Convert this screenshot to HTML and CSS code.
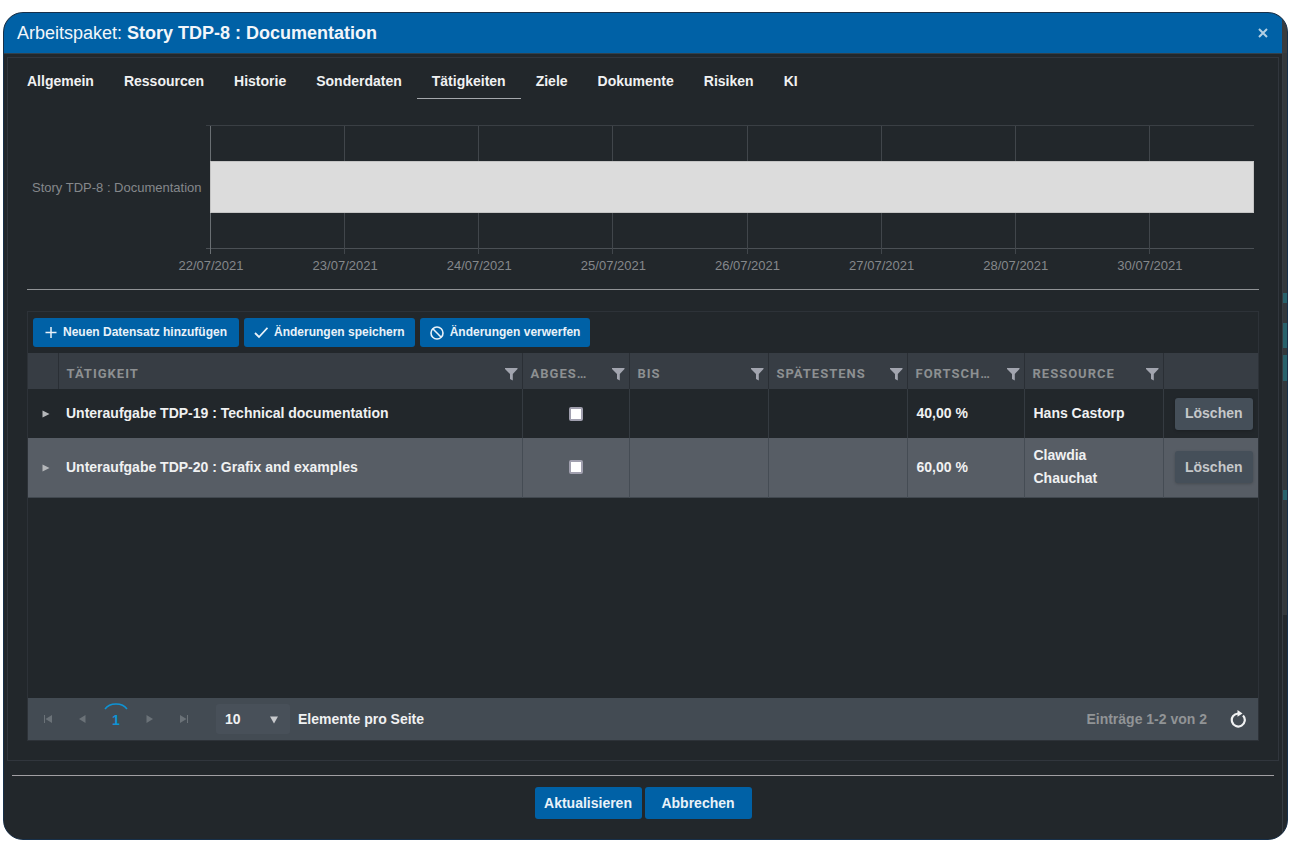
FILE: index.html
```html
<!DOCTYPE html>
<html lang="de">
<head>
<meta charset="utf-8">
<title>Arbeitspaket: Story TDP-8 : Documentation</title>
<link rel="stylesheet" href="styles.css">
</head>
<body>
<svg class="defs" width="0" height="0" aria-hidden="true">
  <symbol id="filter" viewBox="0 0 14 14"><path d="M0 1h12.500v1L7.800 7v6.500L5 12V7L0 2z" fill="currentColor"/></symbol>
</svg>
<div class="frame">
<main class="dialog">
  <header class="titlebar">
    <h1>Arbeitspaket: <strong>Story TDP-8 : Documentation</strong></h1>
    <button class="close" aria-label="Schließen"><svg width="10" height="10" viewBox="0 0 10 10"><path d="M1 1l8 8M9 1L1 9" stroke="currentColor" stroke-width="2"/></svg></button>
  </header>
  <section class="panel">
    <nav class="tabs">
      <a href="#">Allgemein</a><a href="#">Ressourcen</a><a href="#">Historie</a><a href="#">Sonderdaten</a><a href="#" class="active">Tätigkeiten</a><a href="#">Ziele</a><a href="#">Dokumente</a><a href="#">Risiken</a><a href="#">KI</a>
    </nav>
    <div class="chart">
      <div class="series">Story TDP-8 : Documentation</div>
      <div class="plot">
        <div class="ticks">
          <div class="tick"><span>22/07/2021</span></div>
          <div class="tick"><span>23/07/2021</span></div>
          <div class="tick"><span>24/07/2021</span></div>
          <div class="tick"><span>25/07/2021</span></div>
          <div class="tick"><span>26/07/2021</span></div>
          <div class="tick"><span>27/07/2021</span></div>
          <div class="tick"><span>28/07/2021</span></div>
          <div class="tick"><span>30/07/2021</span></div>
        </div>
        <div class="bar"></div>
      </div>
    </div>
    <div class="grid">
      <div class="toolbar">
        <button class="btn small wide"><svg width="12" height="12" viewBox="0 0 12 12"><path d="M6 0v11M0.500 5.500h11" stroke="currentColor" stroke-width="1.500"/></svg>Neuen Datensatz hinzufügen</button>
        <button class="btn small"><svg width="14" height="12" viewBox="0 0 14 12"><path d="M1 6l4 4L13.500 0.800" fill="none" stroke="currentColor" stroke-width="1.800"/></svg>Änderungen speichern</button>
        <button class="btn small"><svg width="14" height="14" viewBox="0 0 14 14"><circle cx="7" cy="7" r="6" fill="none" stroke="currentColor" stroke-width="1.600"/><path d="M2.800 2.800l8.400 8.400" stroke="currentColor" stroke-width="1.600"/></svg>Änderungen verwerfen</button>
      </div>
      <table>
        <colgroup><col class="c-exp"><col><col class="c-done"><col class="c-date"><col class="c-date"><col class="c-prog"><col class="c-date"><col class="c-del"></colgroup>
        <thead>
          <tr>
            <th></th>
            <th><div class="head"><span>TÄTIGKEIT</span><svg width="14" height="14"><use href="#filter"/></svg></div></th>
            <th><div class="head"><span>ABGES…</span><svg width="14" height="14"><use href="#filter"/></svg></div></th>
            <th><div class="head"><span>BIS</span><svg width="14" height="14"><use href="#filter"/></svg></div></th>
            <th><div class="head"><span>SPÄTESTENS</span><svg width="14" height="14"><use href="#filter"/></svg></div></th>
            <th><div class="head"><span>FORTSCH…</span><svg width="14" height="14"><use href="#filter"/></svg></div></th>
            <th><div class="head"><span>RESSOURCE</span><svg width="14" height="14"><use href="#filter"/></svg></div></th>
            <th></th>
          </tr>
        </thead>
        <tbody>
          <tr class="short">
            <td class="exp"><button class="expand" aria-label="Aufklappen"><svg width="8" height="8" viewBox="0 0 8 8"><path d="M0.500 0.500L7.500 4L0.500 7.500z" fill="currentColor"/></svg></button></td>
            <td>Unteraufgabe TDP-19 : Technical documentation</td>
            <td class="mid"><input type="checkbox" aria-label="Abgeschlossen TDP-19"></td>
            <td></td><td></td>
            <td>40,00 %</td>
            <td class="res">Hans Castorp</td>
            <td class="del"><button class="btn gray">Löschen</button></td>
          </tr>
          <tr class="alt">
            <td class="exp"><button class="expand" aria-label="Aufklappen"><svg width="8" height="8" viewBox="0 0 8 8"><path d="M0.500 0.500L7.500 4L0.500 7.500z" fill="currentColor"/></svg></button></td>
            <td>Unteraufgabe TDP-20 : Grafix and examples</td>
            <td class="mid"><input type="checkbox" aria-label="Abgeschlossen TDP-20"></td>
            <td></td><td></td>
            <td>60,00 %</td>
            <td class="res">Clawdia Chauchat</td>
            <td class="del"><button class="btn gray">Löschen</button></td>
          </tr>
        </tbody>
      </table>
      <div class="pager">
        <div class="pages">
          <button aria-label="Erste Seite"><svg width="10" height="10" viewBox="0 0 10 10"><path d="M1.500 1v8" stroke="currentColor"/><path d="M9 1v8L2.500 5z" fill="currentColor"/></svg></button>
          <button aria-label="Vorherige Seite"><svg width="10" height="10" viewBox="0 0 10 10"><path d="M8.500 1v8L2 5z" fill="currentColor"/></svg></button>
          <button class="current"><svg width="24" height="7" viewBox="0 0 24 7"><path d="M1 6Q4.500 1 12 1T23 6" fill="none" stroke="currentColor" stroke-width="1.500"/></svg>1</button>
          <button aria-label="Nächste Seite"><svg width="10" height="10" viewBox="0 0 10 10"><path d="M1.500 1v8L8 5z" fill="currentColor"/></svg></button>
          <button aria-label="Letzte Seite"><svg width="10" height="10" viewBox="0 0 10 10"><path d="M8.500 1v8" stroke="currentColor"/><path d="M1 1v8L7.500 5z" fill="currentColor"/></svg></button>
        </div>
        <div class="size">
          <select id="size"><option>10</option></select>
          <svg width="10" height="8" viewBox="0 0 10 8"><path d="M1 0.500h8L5 7.500z" fill="currentColor"/></svg>
        </div>
        <label for="size">Elemente pro Seite</label>
        <span class="info">Einträge 1-2 von 2</span>
        <button class="refresh" aria-label="Neu laden"><svg width="16" height="18" viewBox="0 0 16 18"><path d="M13 5.500A6.500 6.500 0 1 1 8 3.500" fill="none" stroke="currentColor" stroke-width="2.200"/><path d="M7.500 0L12.500 3.500L7.500 6.800z" fill="currentColor"/></svg></button>
      </div>
    </div>
  </section>
  <footer class="actions">
    <button class="btn">Aktualisieren</button>
    <button class="btn">Abbrechen</button>
  </footer>
</main>
</div>
</body>
</html>
```
FILE: styles.css
```css
* { box-sizing: border-box; }
body {
  margin: 0;
  min-height: 100vh;
  padding: 12px 16px 10px 3px;
  display: flex;
  background: #fff;
  color: #f0f1f2;
  font: bold 14px/23px "Liberation Sans", Arial, sans-serif;
}
button, select { font: inherit; color: inherit; margin: 0; padding: 0; border: 0; background: none; }
button { cursor: pointer; }
.defs { position: absolute; }
.frame {
  flex: 1;
  min-width: 0;
  display: flex;
  padding-right: 4px;
  border: 1px solid #17304a;
  border-radius: 20px;
  overflow: hidden;
  background: linear-gradient(
    #3a3c3e 0 40px, #33383b 0 280px,
    #28616a 0 290px, #33383b 0 310px,
    #28616a 0 335px, #33383b 0 342px,
    #28616a 0 368px, #33383b 0 477px,
    #28616a 0 487px, #33383b 0 602px,
    #23282c 0);
}
.dialog {
  flex: 1;
  min-width: 0;
  display: flex;
  flex-direction: column;
  background: #22272b;
  border-right: 1px solid #353c43;
}
.titlebar {
  height: 41px;
  display: flex;
  align-items: center;
  justify-content: space-between;
  padding: 0 14px 0 13px;
  background: #0061a6;
  border-bottom: 1px solid #32414c;
}
.titlebar h1 { margin: 0; font-size: 18px; font-weight: normal; color: #f2f6fa; }
.close { display: flex; color: #b3d0e4; }
.panel {
  flex: 1;
  display: flex;
  flex-direction: column;
  margin: 3px 3px 0;
  padding: 0 19px 19px;
  border: 1px solid #31363d;
}
.tabs { display: flex; margin: 7px 0 0 -15px; }
.tabs a {
  padding: 5px 15px;
  border-bottom: 1px solid transparent;
  color: inherit;
  text-decoration: none;
}
.tabs .active { border-color: #a5a8ac; }
.chart {
  display: grid;
  grid-template-columns: 183px 1fr;
  margin-top: 26px;
  padding-right: 5px;
  height: 165px;
  border-bottom: 1px solid #909396;
  color: #85888b;
  font-size: 13px;
  font-weight: normal;
}
.series { height: 124px; display: flex; align-items: center; padding-left: 5px; white-space: nowrap; }
.plot { display: grid; grid-template-rows: 124px; }
.ticks, .bar { grid-area: 1 / 1; min-width: 0; }
.ticks {
  display: grid;
  grid-template-columns: repeat(7, 134fr) 105fr;
  margin-left: -4px;
  padding-left: 4px;
  border-top: 1px solid #3a3f44;
  border-bottom: 1px solid #4b5055;
}
.tick { height: 128px; border-left: 1px solid #41464b; }
.tick:first-child { border-color: #6a6f73; }
.tick span { width: 0; display: flex; justify-content: center; padding-top: 128px; white-space: nowrap; }
.bar { height: 52px; align-self: center; background: #dcdcdc; border: 1px solid #c4c4c4; }
.grid {
  flex: 1;
  display: flex;
  flex-direction: column;
  margin-top: 21px;
  border: 1px solid #2d3238;
}
.toolbar { display: flex; gap: 5px; padding: 6px 5px; }
.btn {
  height: 32px;
  min-width: 107px;
  border-radius: 3px;
  background: #0061a6;
  color: #e9f2f9;
}
.btn.small {
  height: 29px;
  min-width: 0;
  display: flex;
  align-items: center;
  justify-content: center;
  gap: 6px;
  padding: 0 10px;
  font-size: 12px;
}
.btn.wide { padding: 0 12px; }
.btn.gray { width: 78px; min-width: 0; background: #454f59; color: #c5c8ca; box-shadow: 0 1px 3px #0003; }
table { width: 100%; table-layout: fixed; border-collapse: collapse; }
.c-exp { width: 30px; }
.c-done { width: 107px; }
.c-date { width: 139px; }
.c-prog { width: 117px; }
.c-del { width: 95px; }
th {
  height: 36px;
  padding: 0 3px 0 8px;
  background: #373d44;
  border-left: 1px solid #2a2f35;
  color: #8d9092;
  font-family: Roboto, sans-serif;
  font-size: 13px;
  letter-spacing: 1px;
  text-align: left;
}
.head { display: flex; align-items: center; justify-content: space-between; padding-top: 5px; }
.head svg { flex: none; color: #a2a5af; }
td { height: 59px; padding: 0 8px 0 9px; border-left: 1px solid #353b41; }
.short td { height: 49px; }
.alt { background: #575d65; border-bottom: 1px solid #41484f; }
.alt td { border-color: #454c54; }
td:nth-child(-n+2), th:first-child { border-left: 0; }
td:nth-child(2) { padding-left: 8px; }
.exp, .mid, .del { padding: 0; text-align: center; }
.exp { padding-left: 6px; }
.del { padding-left: 6px; }
.res { padding-right: 24px; }
.expand { color: #b5b7ba; }
td input {
  appearance: none;
  display: block;
  width: 14px;
  height: 14px;
  margin: 0 auto;
  background: #fff;
  border: 2px solid #a09fae;
  border-radius: 2px;
}
.pager { display: flex; align-items: center; height: 42px; margin-top: auto; padding: 0 12px 0 3px; background: #434b53; }
.pages { display: flex; align-self: stretch; color: #6b7278; }
.pages button { width: 34px; display: flex; flex-direction: column; align-items: center; justify-content: center; }
.pages .current { color: #0e93d4; justify-content: flex-start; padding-top: 5px; line-height: 20px; }
.size { position: relative; margin: 0 8px 0 15px; background: #485059; border-radius: 3px; }
.size select { appearance: none; width: 74px; height: 30px; padding-left: 9px; }
.size svg { position: absolute; right: 11px; top: 12px; color: #c8cacd; pointer-events: none; }
.info { margin-left: auto; margin-right: 23px; color: #919496; }
.refresh { display: flex; color: #f0f1f2; }
.actions {
  display: flex;
  justify-content: center;
  gap: 3px;
  margin: 14px 8px 0;
  padding: 11px 0 20px;
  border-top: 1px solid #a19fa3;
}
```
